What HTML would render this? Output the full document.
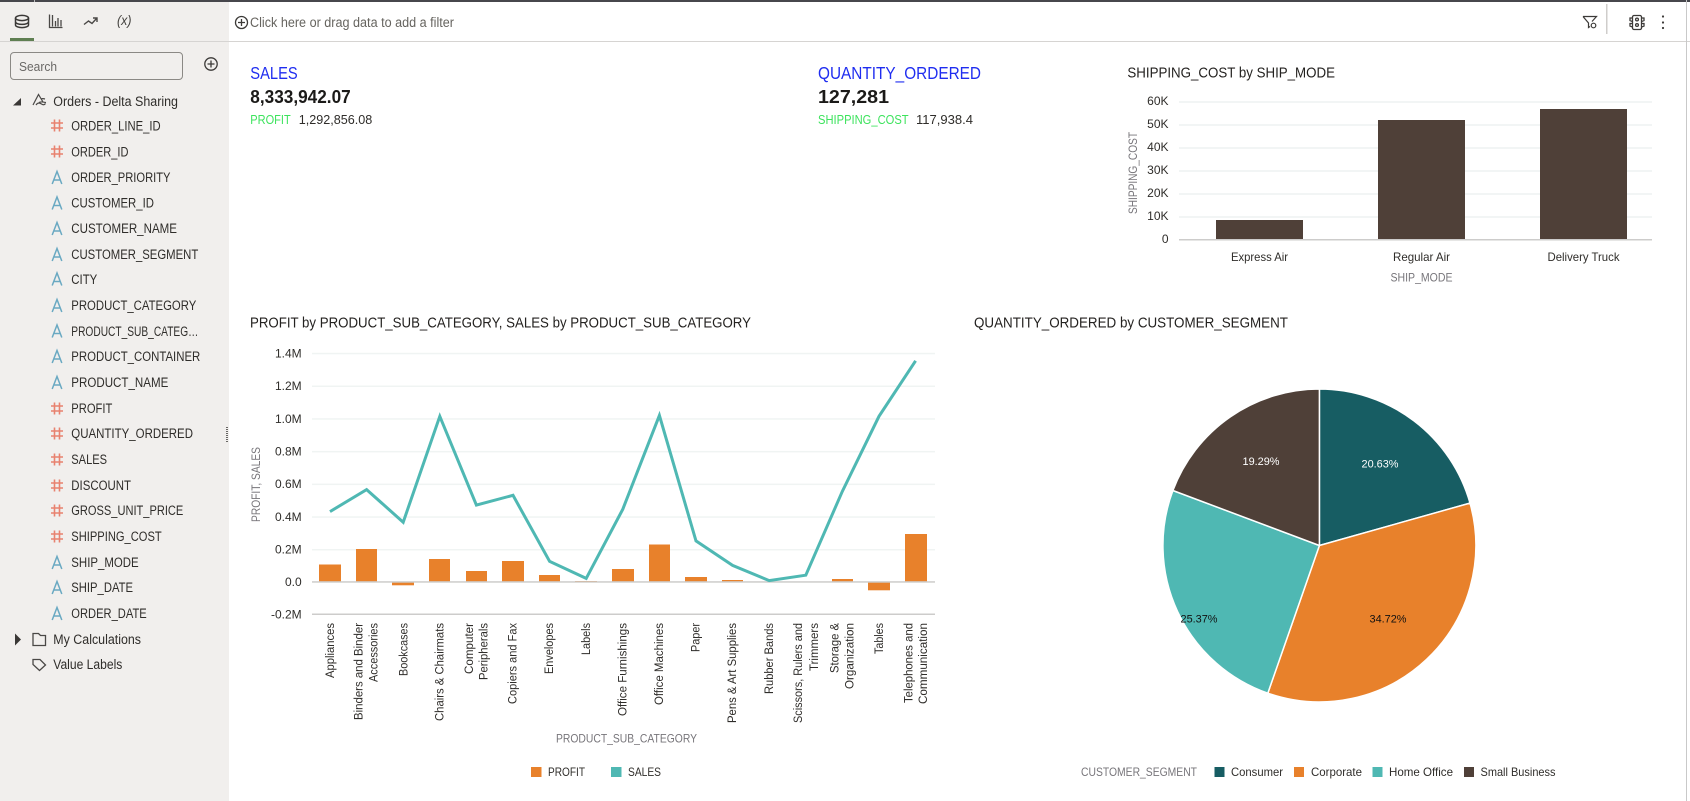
<!DOCTYPE html>
<html lang="en">
<head>
<meta charset="utf-8">
<title>Orders - Delta Sharing</title>
<style>
html,body{margin:0;padding:0;background:#fff;width:1690px;height:801px;overflow:hidden}
svg{display:block;font-family:"Liberation Sans","DejaVu Sans",sans-serif}
.s{font-size:13.5px;fill:#2f2d2a}
.g{font-size:12px;fill:#77757a}
.t{font-size:15px;fill:#242220}
.p{font-size:11px}
</style>
</head>
<body>
<svg width="1690" height="801" viewBox="0 0 1690 801" xmlns="http://www.w3.org/2000/svg">
<rect width="1690" height="801" fill="#fff"/>
<!-- sidebar -->
<rect x="0" y="0" width="229" height="801" fill="#f1efed"/>
<!-- top strip -->
<rect x="0" y="0" width="1690" height="2" fill="#47474c"/>
<rect x="34" y="0" width="1" height="2" fill="#bbb"/>
<!-- toolbar lines -->
<rect x="0" y="41" width="1690" height="1" fill="#d6d4d2"/>
<rect x="10" y="38" width="24" height="3" fill="#5f7f52"/>
<rect x="1686" y="0" width="1" height="801" fill="#c9c9c9"/>
<!-- tab icons -->
<g fill="none" stroke="#3a3836" stroke-width="1.5">
<ellipse cx="22" cy="18" rx="6.500" ry="2.600"/>
<path d="M15.500 18V25c0 1.500 2.900 2.600 6.500 2.600s6.500-1.100 6.500-2.600V18M15.500 21.800c0 1.500 2.900 2.600 6.500 2.600s6.500-1.100 6.500-2.600"/>
</g>
<g fill="none" stroke="#4a4846" stroke-width="1.300">
<path d="M49.500 14.500V27.500H62.500M52.500 15V26.500M55.500 21V26.500M58 18V26.500M61 20V26.500"/>
<path d="M84 24.500l4.500-3.500 3.500 2.500 4.500-5M93 18H97V22" stroke-width="1.400"/>
</g>
<text x="117" y="25" font-size="14" font-style="italic" fill="#44423f" textLength="14.500" lengthAdjust="spacingAndGlyphs">(x)</text>
<!-- search -->
<rect x="10.500" y="52.500" width="172" height="27" rx="3.500" fill="#f1efed" stroke="#8b8985"/>
<text x="19" y="71" font-size="13" fill="#6a6866" textLength="38" lengthAdjust="spacingAndGlyphs">Search</text>
<g fill="none" stroke="#3c3a38" stroke-width="1.300"><circle cx="211" cy="64" r="6.200"/><path d="M207.500 64H214.500M211 60.500V67.500"/></g>
<!-- tree root -->
<path d="M13 105.500L21 105.500L21 98Z" fill="#3a3836"/>
<g fill="none" stroke="#4a4846" stroke-width="1.200"><path d="M33 105L38.500 94.500 43 102M36 105c2-3 4-2 5.500-1s3 1 4-.5M41 99c1.500-.8 2.500-.5 4 0M39 102.500c2-1.200 3.500-.5 7 0"/></g>
<text x="53.300" y="106" class="s" textLength="124.700" lengthAdjust="spacingAndGlyphs">Orders - Delta Sharing</text>

<!-- rows: # icons salmon, A icons blue -->
<g fill="none" stroke="#e8826f" stroke-width="1.600">
<path transform="translate(57 125.500)" d="M-2.500-6V6M2.500-6V6M-6-2.500H6M-6 2.500H6"/>
<path transform="translate(57 151.500)" d="M-2.500-6V6M2.500-6V6M-6-2.500H6M-6 2.500H6"/>
<path transform="translate(57 408.500)" d="M-2.500-6V6M2.500-6V6M-6-2.500H6M-6 2.500H6"/>
<path transform="translate(57 433.500)" d="M-2.500-6V6M2.500-6V6M-6-2.500H6M-6 2.500H6"/>
<path transform="translate(57 459.500)" d="M-2.500-6V6M2.500-6V6M-6-2.500H6M-6 2.500H6"/>
<path transform="translate(57 485.500)" d="M-2.500-6V6M2.500-6V6M-6-2.500H6M-6 2.500H6"/>
<path transform="translate(57 510.500)" d="M-2.500-6V6M2.500-6V6M-6-2.500H6M-6 2.500H6"/>
<path transform="translate(57 536.500)" d="M-2.500-6V6M2.500-6V6M-6-2.500H6M-6 2.500H6"/>
</g>
<g fill="none" stroke="#6aa9c2" stroke-width="1.500">
<path transform="translate(57 177.500)" d="M-4.800 6.500L0-6L4.800 6.500M-3.300 2.500H3.300"/>
<path transform="translate(57 203)" d="M-4.800 6.500L0-6L4.800 6.500M-3.300 2.500H3.300"/>
<path transform="translate(57 228.500)" d="M-4.800 6.500L0-6L4.800 6.500M-3.300 2.500H3.300"/>
<path transform="translate(57 254.500)" d="M-4.800 6.500L0-6L4.800 6.500M-3.300 2.500H3.300"/>
<path transform="translate(57 279)" d="M-4.800 6.500L0-6L4.800 6.500M-3.300 2.500H3.300"/>
<path transform="translate(57 305.500)" d="M-4.800 6.500L0-6L4.800 6.500M-3.300 2.500H3.300"/>
<path transform="translate(57 331)" d="M-4.800 6.500L0-6L4.800 6.500M-3.300 2.500H3.300"/>
<path transform="translate(57 356.500)" d="M-4.800 6.500L0-6L4.800 6.500M-3.300 2.500H3.300"/>
<path transform="translate(57 382.500)" d="M-4.800 6.500L0-6L4.800 6.500M-3.300 2.500H3.300"/>
<path transform="translate(57 562.500)" d="M-4.800 6.500L0-6L4.800 6.500M-3.300 2.500H3.300"/>
<path transform="translate(57 587.500)" d="M-4.800 6.500L0-6L4.800 6.500M-3.300 2.500H3.300"/>
<path transform="translate(57 613.500)" d="M-4.800 6.500L0-6L4.800 6.500M-3.300 2.500H3.300"/>
</g>

<text x="71.300" y="130.500" class="s" textLength="89.400" lengthAdjust="spacingAndGlyphs">ORDER_LINE_ID</text>
<text x="71.300" y="156.500" class="s" textLength="57.200" lengthAdjust="spacingAndGlyphs">ORDER_ID</text>
<text x="71.300" y="182" class="s" textLength="99.200" lengthAdjust="spacingAndGlyphs">ORDER_PRIORITY</text>
<text x="71.300" y="207.500" class="s" textLength="82.700" lengthAdjust="spacingAndGlyphs">CUSTOMER_ID</text>
<text x="71.300" y="233" class="s" textLength="105.700" lengthAdjust="spacingAndGlyphs">CUSTOMER_NAME</text>
<text x="71.300" y="259" class="s" textLength="127" lengthAdjust="spacingAndGlyphs">CUSTOMER_SEGMENT</text>
<text x="71.300" y="284" class="s" textLength="26" lengthAdjust="spacingAndGlyphs">CITY</text>
<text x="71.300" y="310" class="s" textLength="125" lengthAdjust="spacingAndGlyphs">PRODUCT_CATEGORY</text>
<text x="71.300" y="336" class="s" textLength="127" lengthAdjust="spacingAndGlyphs">PRODUCT_SUB_CATEG…</text>
<text x="71.300" y="361" class="s" textLength="129" lengthAdjust="spacingAndGlyphs">PRODUCT_CONTAINER</text>
<text x="71.300" y="387" class="s" textLength="97" lengthAdjust="spacingAndGlyphs">PRODUCT_NAME</text>
<text x="71.300" y="413" class="s" textLength="41" lengthAdjust="spacingAndGlyphs">PROFIT</text>
<text x="71.300" y="438" class="s" textLength="121.700" lengthAdjust="spacingAndGlyphs">QUANTITY_ORDERED</text>
<text x="71.300" y="464" class="s" textLength="35.700" lengthAdjust="spacingAndGlyphs">SALES</text>
<text x="71.300" y="490" class="s" textLength="59.700" lengthAdjust="spacingAndGlyphs">DISCOUNT</text>
<text x="71.300" y="515" class="s" textLength="112" lengthAdjust="spacingAndGlyphs">GROSS_UNIT_PRICE</text>
<text x="71.300" y="541" class="s" textLength="90.400" lengthAdjust="spacingAndGlyphs">SHIPPING_COST</text>
<text x="71.300" y="567" class="s" textLength="67.400" lengthAdjust="spacingAndGlyphs">SHIP_MODE</text>
<text x="71.300" y="592" class="s" textLength="61.700" lengthAdjust="spacingAndGlyphs">SHIP_DATE</text>
<text x="71.300" y="618" class="s" textLength="75.400" lengthAdjust="spacingAndGlyphs">ORDER_DATE</text>

<path d="M15 633.500L21 639.500L15 645.500Z" fill="#3a3836"/>
<path d="M33 633.500H38.500L40.500 635.500H45.500V645.500H33Z" fill="none" stroke="#4a4846" stroke-width="1.300"/>
<text x="53.300" y="644" class="s" textLength="87.700" lengthAdjust="spacingAndGlyphs">My Calculations</text>
<path d="M33 659.500H40L45.500 665 39.500 670.500 33 664.500Z" fill="none" stroke="#4a4846" stroke-width="1.300"/>
<text x="53.300" y="669" class="s" textLength="69" lengthAdjust="spacingAndGlyphs">Value Labels</text>
<path d="M227 427V443" stroke="#3a3836" stroke-width="1.500" stroke-dasharray="1 1"/>

<!-- filter bar -->
<g fill="none" stroke="#3c3a38" stroke-width="1.300"><circle cx="241.500" cy="22.500" r="6"/><path d="M238 22.500H245M241.500 19V26"/></g>
<text x="250" y="27" font-size="13.500" fill="#66645f" textLength="204" lengthAdjust="spacingAndGlyphs">Click here or drag data to add a filter</text>
<g fill="none" stroke="#3c3a38" stroke-width="1.200">
<path d="M1583 16.500H1596.500L1592 21.500M1583 16.500L1588.500 23V27.500L1590 26.500"/><circle cx="1593.500" cy="25.500" r="2.300"/>
</g>
<rect x="1606" y="4" width="1.500" height="30" fill="#cfcdcb"/>
<g fill="none" stroke="#3c3a38" stroke-width="1.300">
<rect x="1632.500" y="15.500" width="9" height="14" rx="1.500"/>
<circle cx="1637" cy="19.500" r="1.400"/><circle cx="1637" cy="25" r="1.400"/>
<path d="M1632.500 18H1630V20.500L1632.500 21.500M1632.500 23.500H1630V26L1632.500 27M1641.500 18H1644V20.500L1641.500 21.500M1641.500 23.500H1644V26L1641.500 27"/>
</g>
<circle cx="1663" cy="16.500" r="1.100" fill="#3c3a38"/><circle cx="1663" cy="22.500" r="1.100" fill="#3c3a38"/><circle cx="1663" cy="28" r="1.100" fill="#3c3a38"/>

<!-- KPIs -->
<text x="250.300" y="79" font-size="17.500" fill="#1f2df0" textLength="47.400" lengthAdjust="spacingAndGlyphs">SALES</text>
<text x="250.300" y="103" font-size="18" font-weight="bold" fill="#1b1a18" textLength="100.400" lengthAdjust="spacingAndGlyphs">8,333,942.07</text>
<text x="250.300" y="124" font-size="13" fill="#3de35d" textLength="40.400" lengthAdjust="spacingAndGlyphs">PROFIT</text>
<text x="298.700" y="124" font-size="13" fill="#2f2d2a" textLength="73.600" lengthAdjust="spacingAndGlyphs">1,292,856.08</text>

<text x="818" y="79" font-size="17.500" fill="#1f2df0" textLength="163" lengthAdjust="spacingAndGlyphs">QUANTITY_ORDERED</text>
<text x="818" y="103" font-size="18" font-weight="bold" fill="#1b1a18" textLength="71" lengthAdjust="spacingAndGlyphs">127,281</text>
<text x="818" y="124" font-size="13" fill="#3de35d" textLength="90.600" lengthAdjust="spacingAndGlyphs">SHIPPING_COST</text>
<text x="916" y="124" font-size="13" fill="#2f2d2a" textLength="57" lengthAdjust="spacingAndGlyphs">117,938.4</text>

<!-- Shipping chart -->
<text x="1127.400" y="77.500" class="t" textLength="207.600" lengthAdjust="spacingAndGlyphs">SHIPPING_COST by SHIP_MODE</text>
<g fill="#f2f5f5">
<rect x="1179" y="101" width="473" height="2"/><rect x="1179" y="124" width="473" height="2"/><rect x="1179" y="147" width="473" height="2"/><rect x="1179" y="170" width="473" height="2"/><rect x="1179" y="193" width="473" height="2"/><rect x="1179" y="216" width="473" height="2"/>
</g>
<g fill="#4f4038">
<rect x="1216" y="220" width="87" height="19"/><rect x="1378" y="120" width="87" height="119"/><rect x="1540" y="109" width="87" height="130"/>
</g>
<rect x="1179" y="239" width="473" height="1.500" fill="#cdcccb"/>
<g text-anchor="end" font-size="12" fill="#2f2d2a">
<text x="1168.500" y="105">60K</text><text x="1168.500" y="128">50K</text><text x="1168.500" y="151">40K</text><text x="1168.500" y="174">30K</text><text x="1168.500" y="197">20K</text><text x="1168.500" y="220">10K</text><text x="1168.500" y="243">0</text>
</g>
<g text-anchor="middle" font-size="12" fill="#2f2d2a">
<text x="1259.500" y="261" textLength="57" lengthAdjust="spacingAndGlyphs">Express Air</text>
<text x="1421.500" y="261" textLength="57" lengthAdjust="spacingAndGlyphs">Regular Air</text>
<text x="1583.500" y="261" textLength="72" lengthAdjust="spacingAndGlyphs">Delivery Truck</text>
</g>
<text x="1421.500" y="281.500" text-anchor="middle" class="g" textLength="62" lengthAdjust="spacingAndGlyphs">SHIP_MODE</text>
<text transform="translate(1137 214) rotate(-90)" class="g" textLength="82" lengthAdjust="spacingAndGlyphs">SHIPPING_COST</text>

<!-- Line/bar chart -->
<text x="250" y="327.500" class="t" textLength="501" lengthAdjust="spacingAndGlyphs">PROFIT by PRODUCT_SUB_CATEGORY, SALES by PRODUCT_SUB_CATEGORY</text>
<g fill="#f0f4f3">
<rect x="312" y="352.800" width="623" height="1.500"/><rect x="312" y="385.500" width="623" height="1.500"/><rect x="312" y="418.200" width="623" height="1.500"/><rect x="312" y="450.900" width="623" height="1.500"/><rect x="312" y="483.600" width="623" height="1.500"/><rect x="312" y="516.300" width="623" height="1.500"/><rect x="312" y="549" width="623" height="1.500"/>
</g>
<g fill="#e8812b">
<rect x="319" y="564.500" width="22" height="17.500"/>
<rect x="356" y="549" width="21" height="33"/>
<rect x="392" y="582" width="22" height="3.300"/>
<rect x="429" y="559" width="21" height="23"/>
<rect x="466" y="571" width="21" height="11"/>
<rect x="502" y="561" width="22" height="21"/>
<rect x="539" y="575" width="21" height="7"/>
<rect x="575" y="581" width="22" height="1"/>
<rect x="612" y="569" width="22" height="13"/>
<rect x="649" y="544.500" width="21" height="37.500"/>
<rect x="685" y="577" width="22" height="5"/>
<rect x="722" y="580" width="21" height="2"/>
<rect x="832" y="579" width="21" height="3"/>
<rect x="868" y="582" width="22" height="8.300"/>
<rect x="905" y="534" width="22" height="48"/>
</g>
<rect x="312" y="581.200" width="623" height="1.500" fill="#cdcccb"/>
<rect x="312" y="613.500" width="623" height="1.500" fill="#cdcccb"/>
<polyline fill="none" stroke="#4fb8b3" stroke-width="3" stroke-linejoin="miter" points="330,511.600 366.600,489.600 403.200,522.200 439.800,416.300 476.400,505.100 513,495.300 549.600,561.300 586.200,578.400 622.800,509.200 659.400,415.400 696,540.900 732.600,565.400 769.200,580.600 805.800,575.200 842.400,491.200 879,416.300 915.600,360.800"/>
<g text-anchor="end" font-size="12" fill="#2f2d2a">
<text x="301.700" y="357.500">1.4M</text><text x="301.700" y="390">1.2M</text><text x="301.700" y="423">1.0M</text><text x="301.700" y="455.500">0.8M</text><text x="301.700" y="488">0.6M</text><text x="301.700" y="521">0.4M</text><text x="301.700" y="553.500">0.2M</text><text x="301.700" y="586">0.0</text><text x="301.700" y="618.500">-0.2M</text>
</g>
<text transform="translate(260 522) rotate(-90)" class="g" textLength="75" lengthAdjust="spacingAndGlyphs">PROFIT, SALES</text>

<g font-size="11.500" fill="#2f2d2a" text-anchor="end">
<text transform="translate(334 623) rotate(-90)" textLength="55" lengthAdjust="spacingAndGlyphs">Appliances</text>
<text transform="translate(362.500 623) rotate(-90)" textLength="97" lengthAdjust="spacingAndGlyphs">Binders and Binder</text>
<text transform="translate(377.500 623) rotate(-90)" textLength="59" lengthAdjust="spacingAndGlyphs">Accessories</text>
<text transform="translate(407.500 623) rotate(-90)" textLength="53" lengthAdjust="spacingAndGlyphs">Bookcases</text>
<text transform="translate(443.500 623) rotate(-90)" textLength="98" lengthAdjust="spacingAndGlyphs">Chairs &amp; Chairmats</text>
<text transform="translate(473 623) rotate(-90)" textLength="51" lengthAdjust="spacingAndGlyphs">Computer</text>
<text transform="translate(487.500 623) rotate(-90)" textLength="57" lengthAdjust="spacingAndGlyphs">Peripherals</text>
<text transform="translate(516.500 623) rotate(-90)" textLength="81" lengthAdjust="spacingAndGlyphs">Copiers and Fax</text>
<text transform="translate(553 623) rotate(-90)" textLength="51" lengthAdjust="spacingAndGlyphs">Envelopes</text>
<text transform="translate(590 623) rotate(-90)" textLength="32" lengthAdjust="spacingAndGlyphs">Labels</text>
<text transform="translate(626.500 623) rotate(-90)" textLength="93" lengthAdjust="spacingAndGlyphs">Office Furnishings</text>
<text transform="translate(663 623) rotate(-90)" textLength="82" lengthAdjust="spacingAndGlyphs">Office Machines</text>
<text transform="translate(699.500 623) rotate(-90)" textLength="29" lengthAdjust="spacingAndGlyphs">Paper</text>
<text transform="translate(736 623) rotate(-90)" textLength="100" lengthAdjust="spacingAndGlyphs">Pens &amp; Art Supplies</text>
<text transform="translate(773 623) rotate(-90)" textLength="71" lengthAdjust="spacingAndGlyphs">Rubber Bands</text>
<text transform="translate(802 623) rotate(-90)" textLength="100" lengthAdjust="spacingAndGlyphs">Scissors, Rulers and</text>
<text transform="translate(818 623) rotate(-90)" textLength="48" lengthAdjust="spacingAndGlyphs">Trimmers</text>
<text transform="translate(838.500 623) rotate(-90)" textLength="50" lengthAdjust="spacingAndGlyphs">Storage &amp;</text>
<text transform="translate(853.500 623) rotate(-90)" textLength="66" lengthAdjust="spacingAndGlyphs">Organization</text>
<text transform="translate(883 623) rotate(-90)" textLength="31" lengthAdjust="spacingAndGlyphs">Tables</text>
<text transform="translate(912.500 623) rotate(-90)" textLength="80" lengthAdjust="spacingAndGlyphs">Telephones and</text>
<text transform="translate(927 623) rotate(-90)" textLength="81" lengthAdjust="spacingAndGlyphs">Communication</text>
</g>
<text x="626.500" y="742.500" text-anchor="middle" class="g" textLength="141" lengthAdjust="spacingAndGlyphs">PRODUCT_SUB_CATEGORY</text>
<rect x="531" y="767" width="10.500" height="10" fill="#e8812b"/>
<text x="548" y="776" font-size="12" fill="#2f2d2a" textLength="37" lengthAdjust="spacingAndGlyphs">PROFIT</text>
<rect x="611" y="767" width="10.500" height="10" fill="#4fb8b3"/>
<text x="628" y="776" font-size="12" fill="#2f2d2a" textLength="33" lengthAdjust="spacingAndGlyphs">SALES</text>

<!-- Pie -->
<text x="974" y="327.500" class="t" textLength="314" lengthAdjust="spacingAndGlyphs">QUANTITY_ORDERED by CUSTOMER_SEGMENT</text>
<g stroke="#fff" stroke-width="1.500" stroke-linejoin="round">
<path fill="#175d63" d="M1319.400 545.500L1319.400 389A156.500 156.500 0 0 1 1470 503.100Z"/>
<path fill="#e8812b" d="M1319.400 545.500L1470 503.100A156.500 156.500 0 0 1 1267.800 693.200Z"/>
<path fill="#4fb8b3" d="M1319.400 545.500L1267.800 693.200A156.500 156.500 0 0 1 1172.900 490.500Z"/>
<path fill="#4f4038" d="M1319.400 545.500L1172.900 490.500A156.500 156.500 0 0 1 1319.400 389Z"/>
</g>
<g class="p" text-anchor="middle">
<text x="1380" y="467.500" fill="#fff" textLength="37" lengthAdjust="spacingAndGlyphs">20.63%</text>
<text x="1388" y="622.500" fill="#111" textLength="37" lengthAdjust="spacingAndGlyphs">34.72%</text>
<text x="1199" y="622.500" fill="#111" textLength="37" lengthAdjust="spacingAndGlyphs">25.37%</text>
<text x="1261" y="465" fill="#fff" textLength="37" lengthAdjust="spacingAndGlyphs">19.29%</text>
</g>
<text x="1081" y="776" class="g" textLength="116" lengthAdjust="spacingAndGlyphs">CUSTOMER_SEGMENT</text>
<rect x="1214.500" y="767" width="10" height="10" fill="#175d63"/>
<text x="1231" y="776" font-size="12" fill="#2f2d2a" textLength="52" lengthAdjust="spacingAndGlyphs">Consumer</text>
<rect x="1294" y="767" width="10" height="10" fill="#e8812b"/>
<text x="1311" y="776" font-size="12" fill="#2f2d2a" textLength="51" lengthAdjust="spacingAndGlyphs">Corporate</text>
<rect x="1372.500" y="767" width="10" height="10" fill="#4fb8b3"/>
<text x="1389" y="776" font-size="12" fill="#2f2d2a" textLength="64" lengthAdjust="spacingAndGlyphs">Home Office</text>
<rect x="1464" y="767" width="10" height="10" fill="#4f4038"/>
<text x="1480.500" y="776" font-size="12" fill="#2f2d2a" textLength="75" lengthAdjust="spacingAndGlyphs">Small Business</text>
</svg>
</body>
</html>
